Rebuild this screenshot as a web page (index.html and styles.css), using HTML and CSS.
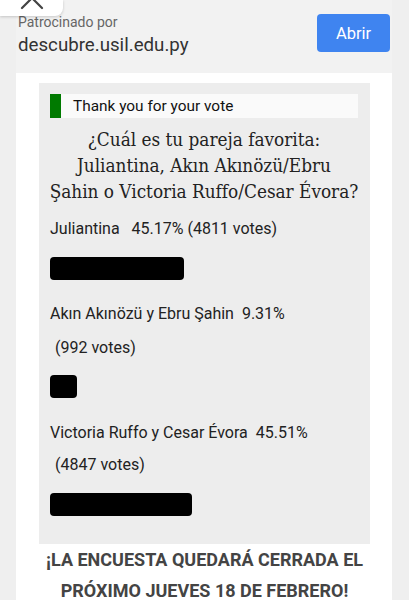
FILE: index.html
```
<!DOCTYPE html>
<html lang="es">

<head>
	<meta charset="UTF-8">
	<meta name="viewport" content="width=device-width, initial-scale=1.0">
	<title>Encuesta</title>
	<link rel="stylesheet" href="styles.css">
</head>

<body>
	<div class="close-tab">
		<svg width="28" height="16" viewBox="0 0 28 16">
			<path d="M4 14 L14 4 L24 14" fill="none" stroke="#444" stroke-width="2.2" stroke-linecap="round"/>
		</svg>
	</div>

	<div class="page">
		<div class="sponsor">
			<div class="sponsor-text">
				<p class="sponsor-label">Patrocinado por</p>
				<p class="sponsor-url">descubre.usil.edu.py</p>
			</div>
			<button class="open-btn">Abrir</button>
		</div>

		<div class="card">
			<div class="poll">
				<div class="notice">
					<span class="notice-mark"></span>
					<span>Thank you for your vote</span>
				</div>
				<h2 class="question">¿Cuál es tu pareja favorita:<br>Juliantina, Akın Akınözü/Ebru<br>Şahin o Victoria Ruffo/Cesar Évora?</h2>

				<div class="answer">
					<p class="answer-text">Juliantina&nbsp;&nbsp; 45.17% (4811 votes)</p>
					<div class="bar" style="width: 134px;"></div>
				</div>
				<div class="answer">
					<p class="answer-text">Akın Akınözü y Ebru Şahin&nbsp; 9.31%</p>
					<p class="answer-votes">(992 votes)</p>
					<div class="bar" style="width: 27px;"></div>
				</div>
				<div class="answer">
					<p class="answer-text">Victoria Ruffo y Cesar Évora&nbsp; 45.51%</p>
					<p class="answer-votes">(4847 votes)</p>
					<div class="bar" style="width: 142px;"></div>
				</div>
			</div>
			<p class="closing">¡LA ENCUESTA QUEDARÁ CERRADA EL PRÓXIMO JUEVES 18 DE FEBRERO!</p>
		</div>
	</div>
</body>

</html>
```

FILE: styles.css
```
body {
	font-family: Roboto, "Noto Sans", sans-serif;
	background-color: #efefef;
	margin: 0;
	padding: 0;
	color: #222;
}

p {
	margin: 0;
}

.close-tab {
	position: absolute;
	top: 0;
	left: 0;
	width: 63px;
	height: 16px;
	background-color: #fff;
	border-radius: 0 0 8px 0;
	box-shadow: 0 1px 3px rgba(0, 0, 0, 0.18);
	display: flex;
	justify-content: center;
	overflow: hidden;
}

.close-tab svg {
	margin-top: -6px;
}

.page {
	margin-left: 16px;
	width: 376px;
	height: 600px;
	overflow: hidden;
}

.sponsor {
	background-color: #f2f2f2;
	height: 73px;
	display: flex;
	justify-content: space-between;
	align-items: flex-start;
	padding: 0 2px;
}

.sponsor-text {
	padding-top: 14px;
}

.sponsor-label {
	font-size: 14px;
	color: #666;
	line-height: 16px;
}

.sponsor-url {
	font-size: 18.7px;
	color: #333;
	line-height: 24px;
	margin-top: 3px;
}

.open-btn {
	margin-top: 14px;
	width: 73px;
	height: 38px;
	background-color: #3f84f0;
	color: #fff;
	border: none;
	border-radius: 4px;
	font-family: Roboto, sans-serif;
	font-size: 16.5px;
}

.card {
	background-color: #fff;
	padding: 10px 22px 0 23px;
}

.poll {
	background-color: #ededed;
	padding: 11px 12px 28px 11px;
}

.notice {
	display: flex;
	align-items: center;
	height: 24px;
	background-color: #fafafa;
	font-size: 15.4px;
	color: #111;
}

.notice-mark {
	width: 11px;
	height: 24px;
	background-color: #007a00;
	margin-right: 12px;
}

.question {
	font-family: "DejaVu Serif Condensed", "DejaVu Serif", serif;
	font-stretch: condensed;
	font-weight: normal;
	font-size: 18.8px;
	line-height: 26px;
	text-align: center;
	white-space: nowrap;
	color: #222;
	margin: 9px -4px 14px;
}

.answer-text,
.answer-votes {
	font-size: 16px;
	line-height: 20px;
	color: #222;
}

.answer-votes {
	margin-top: 14px;
	padding-left: 5px;
}

.bar {
	height: 23px;
	background-color: #000;
	border-radius: 4px;
	margin: 18px 0 24px;
}

.answer:nth-child(4) .bar {
	margin-top: 17px;
	margin-bottom: 25px;
}

.answer:nth-child(5) .answer-votes {
	margin-top: 12px;
}

.answer:last-child .bar {
	margin-bottom: 0;
}

.closing {
	font-weight: bold;
	font-size: 18px;
	line-height: 31px;
	color: #444;
	text-align: center;
	margin: 0 -8px;
}
```
